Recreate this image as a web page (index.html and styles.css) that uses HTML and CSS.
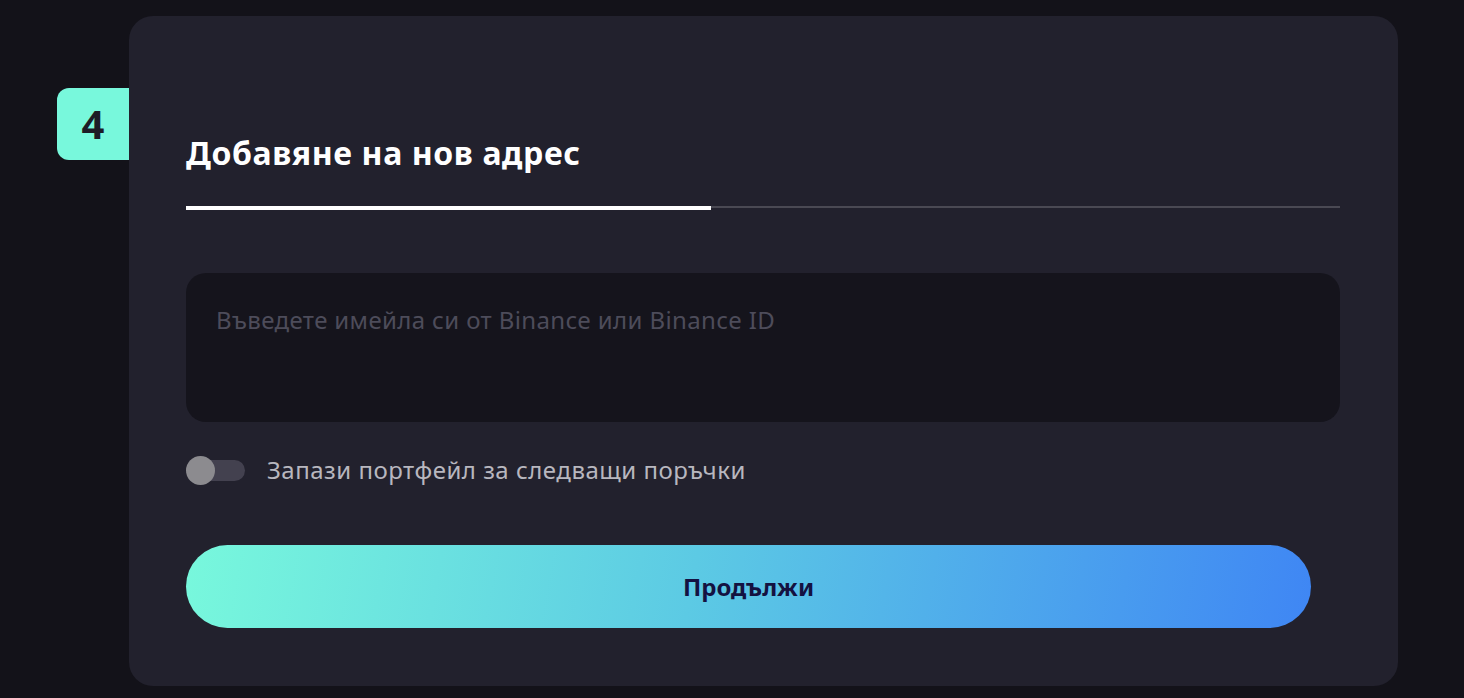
FILE: index.html
```html
<!DOCTYPE html>
<html lang="bg">
<head>
<meta charset="utf-8">
<link rel="stylesheet" href="styles.css">
</head>
<body>
<div class="page">
  <div class="step">
    <div class="badge">4</div>
    <div class="card">
      <h1 class="title">Добавяне на нов адрес</h1>
      <div class="progress"><div class="progress-fill"></div></div>
      <div class="input-box">
        <div class="placeholder">Въведете имейла си от Binance или Binance ID</div>
      </div>
      <div class="toggle-row">
        <div class="toggle"><div class="track"></div><div class="knob"></div></div>
        <span class="toggle-label">Запази портфейл за следващи поръчки</span>
      </div>
      <button class="btn">Продължи</button>
    </div>
  </div>
</div>
</body>
</html>
```
FILE: styles.css
```css
html, body {
  margin: 0;
  padding: 0;
  background: #131219;
  font-family: "Noto Sans", "Inter", sans-serif;
}
.page {
  width: 1464px;
  height: 698px;
  box-sizing: border-box;
  padding-top: 16px;
  padding-left: 57px;
}
.step {
  display: flex;
  align-items: flex-start;
}
.badge {
  margin-top: 72px;
  width: 72px;
  height: 72px;
  background: #78f8dc;
  border-radius: 12px 0 0 12px;
  color: #1d1c26;
  font-weight: 700;
  font-size: 40px;
  display: flex;
  align-items: center;
  justify-content: center;
  line-height: 1;
}
.card {
  width: 1269px;
  height: 670px;
  box-sizing: border-box;
  background: #22212d;
  border-radius: 24px;
  padding: 0 58px 0 57px;
  display: flex;
  flex-direction: column;
}
.title {
  margin: 116px 0 0;
  font-size: 32px;
  line-height: 42px;
  font-weight: 700;
  color: #ffffff;
  letter-spacing: 0.6px;
}
.progress {
  margin-top: 32px;
  height: 4px;
  position: relative;
  display: flex;
  align-items: flex-start;
}
.progress::before {
  content: "";
  display: block;
  position: absolute;
  left: 0;
  right: 0;
  top: 0;
  height: 2px;
  background: #4a4953;
}
.progress-fill {
  position: relative;
  width: 525px;
  height: 4px;
  background: #ffffff;
}
.input-box {
  margin-top: 63px;
  height: 149px;
  background: #15141c;
  border-radius: 20px;
  padding: 29px 30px 0;
  box-sizing: border-box;
}
.placeholder {
  color: #4d4c5a;
  font-size: 24px;
  line-height: 36px;
  letter-spacing: 0.37px;
}
.toggle-row {
  margin-top: 33px;
  display: flex;
  align-items: center;
  gap: 22px;
}
.toggle {
  position: relative;
  width: 59px;
  height: 29px;
}
.track {
  position: absolute;
  left: 2px;
  right: 0;
  top: 4px;
  height: 21px;
  border-radius: 11px;
  background: #43414f;
}
.knob {
  position: absolute;
  left: 0;
  top: 0;
  width: 29px;
  height: 29px;
  border-radius: 50%;
  background: #8c8b8f;
}
.toggle-label {
  color: #b8b7bf;
  font-size: 24px;
  line-height: 30px;
  letter-spacing: 0.5px;
}
.btn {
  margin-top: 60px;
  width: 1125px;
  height: 83px;
  border: none;
  border-radius: 42px;
  background: linear-gradient(100deg, #78f8dc 0%, #5ccae4 45%, #3f86f4 100%);
  color: #141241;
  font-family: "Noto Sans", "Inter", sans-serif;
  font-weight: 700;
  font-size: 24px;
  cursor: pointer;
  padding: 0;
}
```
